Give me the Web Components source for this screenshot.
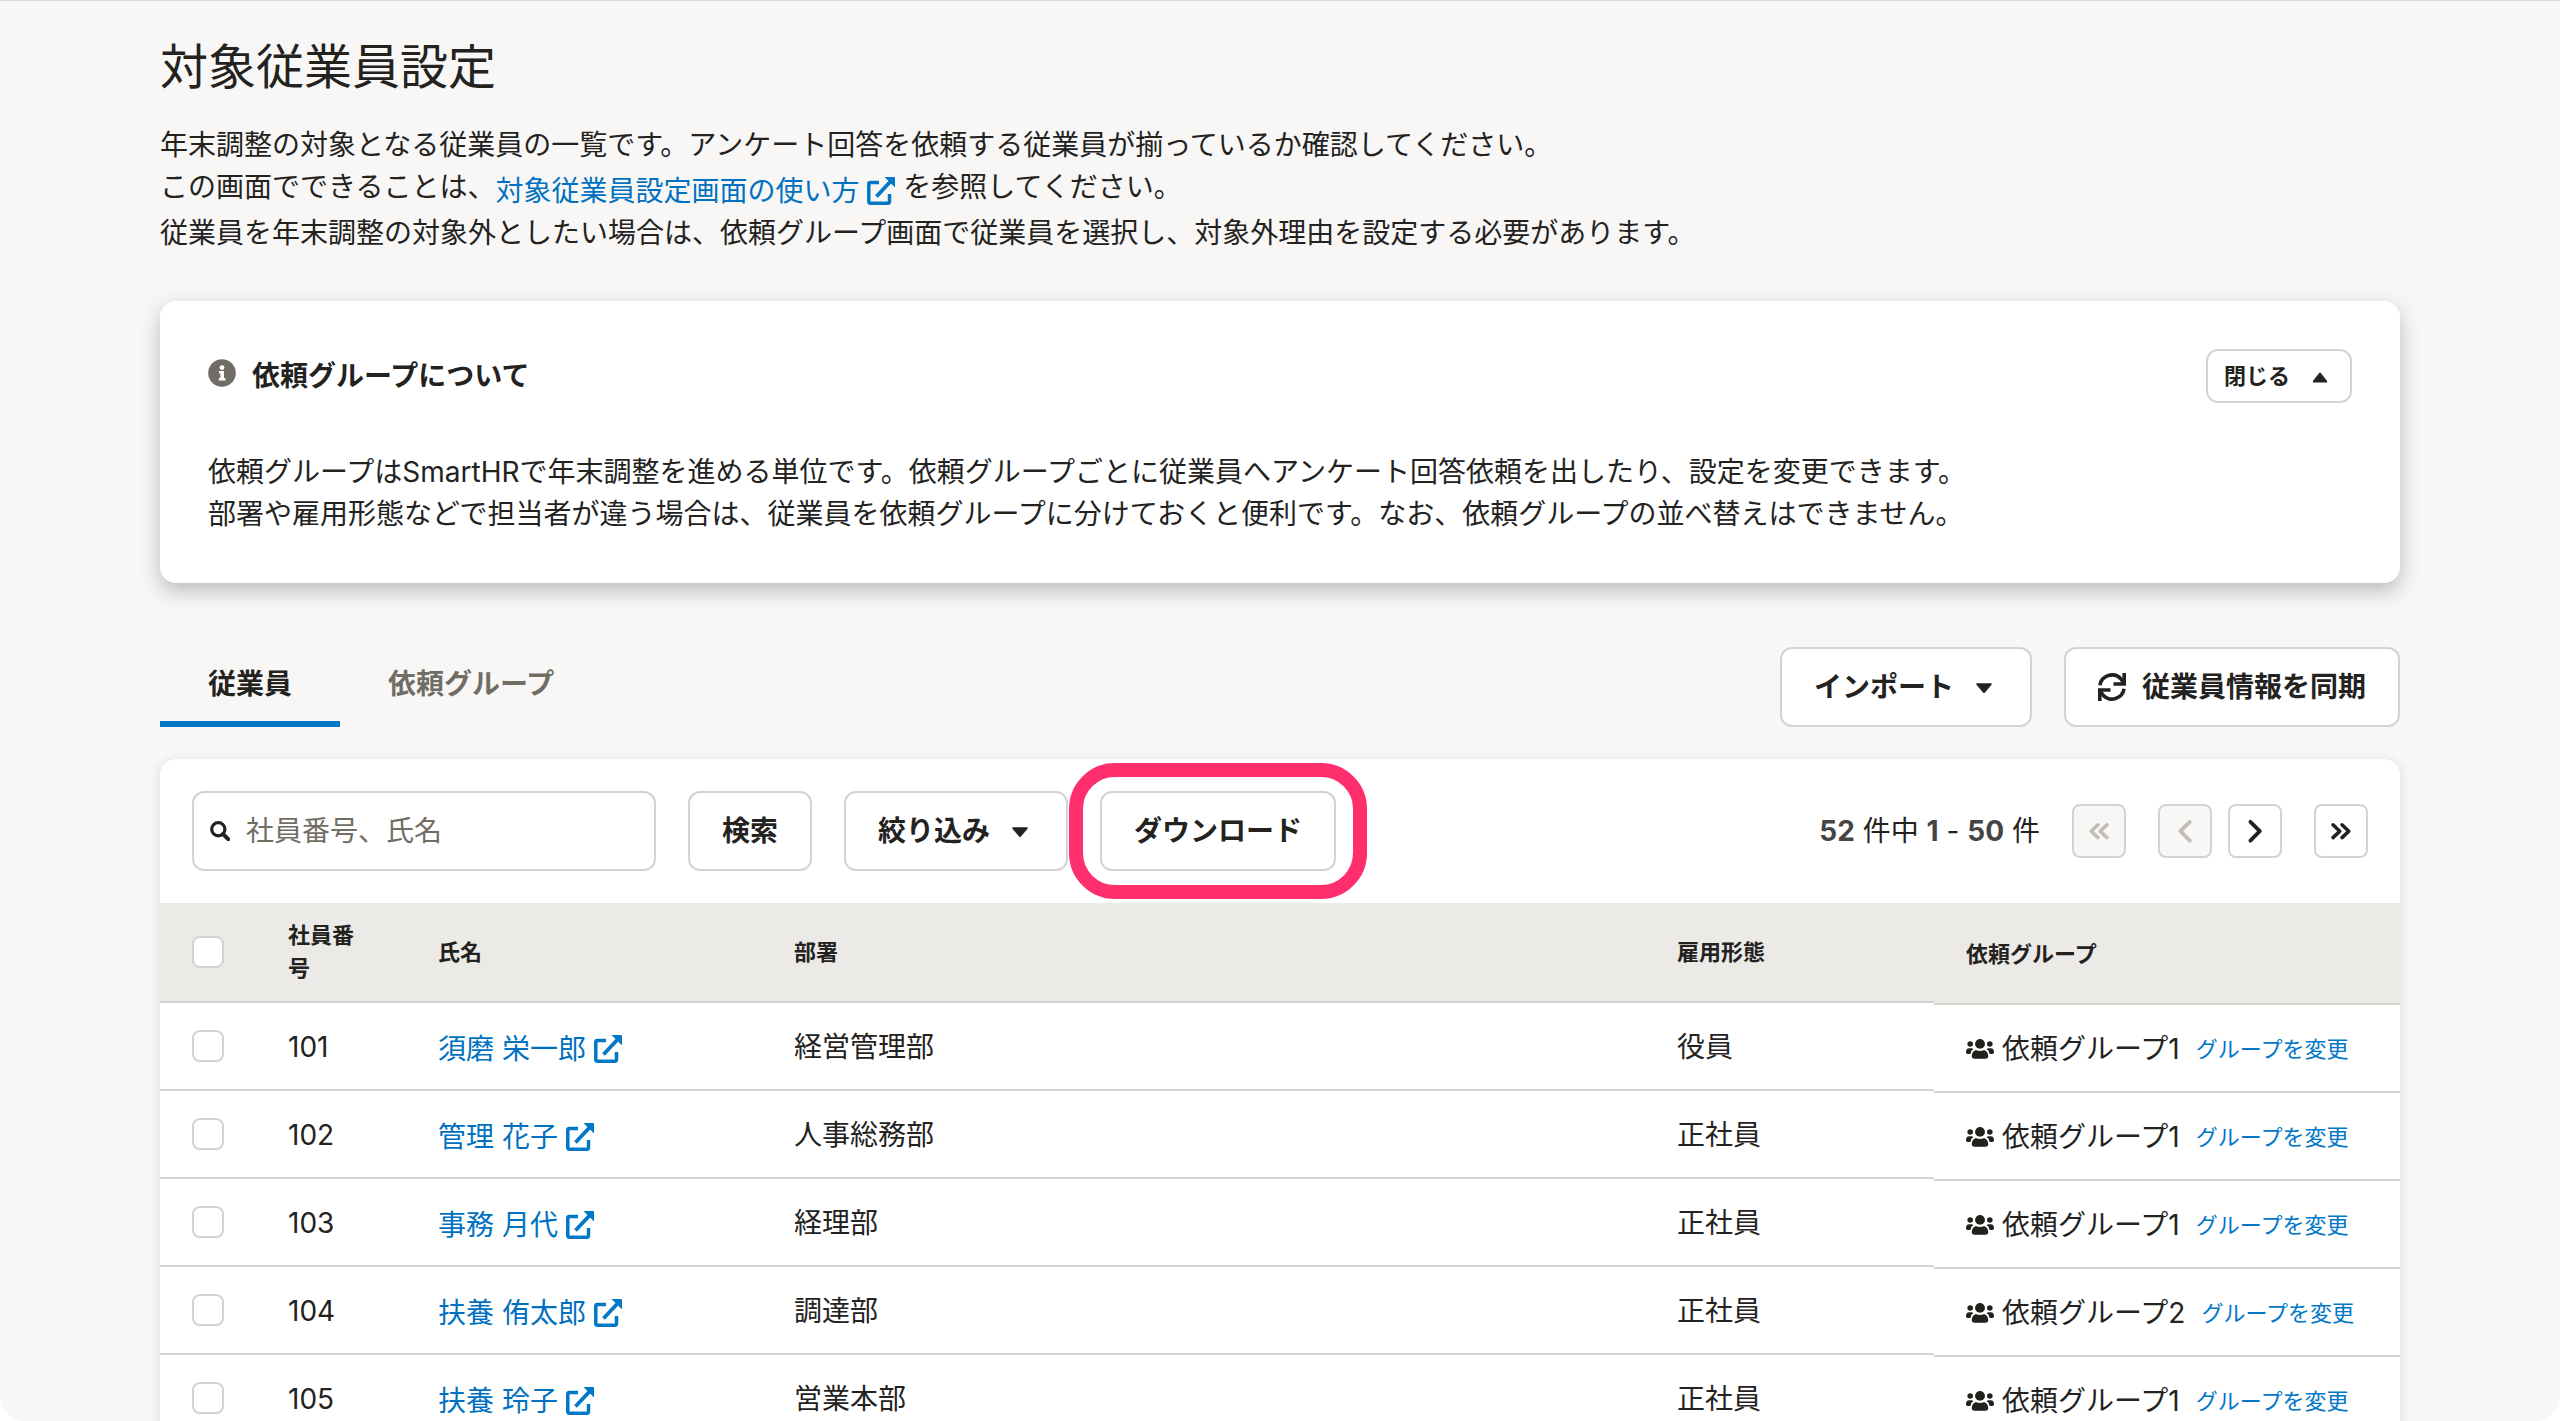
<!DOCTYPE html>
<html lang="ja">
<head>
<meta charset="utf-8">
<meta name="viewport" content="width=device-width, initial-scale=1">
<title>対象従業員設定</title>
<style>
  :root {
    --text: #23221e;
    --grey: #706d65;
    --line: #d4d3ce;
    --head: #ebeae6;
    --base: #f8f7f5;
    --main: #0077c7;
    --link: #0071c1;
    --disabled: #c1bdb7;
    --mark: #ff2e6c;
  }
  html, body { margin: 0; height: 100%; background: #fff; }
  body {
    overflow: hidden;
    color: var(--text);
    font: 400 28px/42px Inter, "Noto Sans CJK JP", sans-serif;
  }
</style>
</head>
<body>
<target-page></target-page>

<template id="t-page">
  <style>
    :host { display: block; box-sizing: border-box; height: 100%; overflow: hidden; background: var(--base); border-top: 1px solid #d6dadd; border-radius: 0 0 24px 24px; }
    main { padding: 36px 160px 0; }
    h1 { margin: 0 0 27px; font-size: 48px; line-height: 60px; font-weight: 400; }
    p { margin: 0; }
    .lead { margin-bottom: 47px; }
    .bar { display: flex; justify-content: space-between; align-items: flex-end; margin: 64px 0 32px; }
    .actions { display: flex; gap: 32px; }
  </style>
  <main>
    <h1>対象従業員設定</h1>
    <p class="lead">年末調整の対象となる従業員の一覧です。アンケート回答を依頼する従業員が揃っているか確認してください。<br>この画面でできることは、<ext-link>対象従業員設定画面の使い方</ext-link> を参照してください。<br>従業員を年末調整の対象外としたい場合は、依頼グループ画面で従業員を選択し、対象外理由を設定する必要があります。</p>
    <info-panel heading="依頼グループについて">
      <p>依頼グループはSmartHRで年末調整を進める単位です。依頼グループごとに従業員へアンケート回答依頼を出したり、設定を変更できます。<br>部署や雇用形態などで担当者が違う場合は、従業員を依頼グループに分けておくと便利です。なお、依頼グループの並べ替えはできません。</p>
    </info-panel>
    <div class="bar">
      <tab-bar></tab-bar>
      <div class="actions">
        <ui-button>インポート<ui-icon name="down"></ui-icon></ui-button>
        <ui-button><ui-icon name="sync"></ui-icon>従業員情報を同期</ui-button>
      </div>
    </div>
    <employee-list></employee-list>
  </main>
</template>

<template id="t-link">
  <style>
    :host { display: inline-flex; vertical-align: -4px; }
    a { display: inline-flex; align-items: center; gap: 8px; color: var(--link); text-decoration: none; }
    ui-icon { color: var(--main); }
  </style>
  <a href="#"><slot></slot><ui-icon name="external"></ui-icon></a>
</template>

<template id="t-button">
  <style>
    :host { display: inline-flex; }
    button {
      display: flex; align-items: center; justify-content: center; gap: 16px; box-sizing: border-box;
      min-height: 80px; padding: 0 32px; border: 2px solid var(--line); border-radius: 12px;
      background: #fff; color: inherit; font: inherit; font-weight: 700; white-space: nowrap;
    }
    :host([size="s"]) button { min-height: 54px; padding: 0 16px; font-size: 22px; line-height: 33px; }
    :host([size="icon"]) button { width: 54px; min-height: 54px; padding: 0; border-radius: 8px; }
    button:disabled { background: var(--base); color: var(--disabled); }
  </style>
  <button type="button"><slot></slot></button>
</template>

<template id="t-panel">
  <style>
    :host { display: block; padding: 48px; border-radius: 16px; background: #fff; box-shadow: 0 8px 20px rgba(51,51,51,.3); }
    header { display: flex; justify-content: space-between; align-items: center; margin-bottom: 48px; }
    h2 { display: flex; align-items: center; gap: 16px; margin: 0; font-size: 28px; line-height: 42px; font-weight: 700; }
    h2 ui-icon { color: var(--grey); margin-bottom: 6px; }
  </style>
  <header>
    <h2><ui-icon name="info"></ui-icon><span></span></h2>
    <ui-button size="s">閉じる<ui-icon name="up"></ui-icon></ui-button>
  </header>
  <slot></slot>
</template>

<template id="t-tabs">
  <style>
    :host { display: flex; }
    button { padding: 16px 48px; border: 0; border-bottom: 6px solid transparent; background: none; color: var(--grey); font: inherit; font-weight: 700; }
    button[aria-selected="true"] { color: var(--text); border-color: var(--main); }
  </style>
  <button type="button" role="tab" aria-selected="true">従業員</button>
  <button type="button" role="tab" aria-selected="false">依頼グループ</button>
</template>

<template id="t-list">
  <style>
    :host { display: block; border-radius: 16px; background: #fff; box-shadow: 0 2px 8px 2px rgba(51,51,51,.1); }
    .tools { display: flex; align-items: center; gap: 32px; padding: 32px; }
    .search { display: flex; align-items: center; gap: 16px; box-sizing: border-box; width: 464px; height: 80px; padding: 0 16px; border: 2px solid var(--line); border-radius: 12px; background: #fff; }
    .search input { flex: 1; min-width: 0; padding: 0; border: 0; outline: 0; background: none; color: inherit; font: inherit; }
    .search input::placeholder { color: var(--grey); opacity: 1; }
    .marked { position: relative; display: inline-flex; }
    .marked::after { content: ""; position: absolute; inset: -28px -31px; border: 14px solid var(--mark); border-radius: 46px; pointer-events: none; }
    .pager { display: flex; align-items: center; gap: 32px; margin-left: auto; }
    .pager div { display: flex; gap: 16px; }
    .pager b { color: #454545; }
    table { width: 100%; border-collapse: separate; border-spacing: 0; table-layout: fixed; }
    .c-check { width: 96px; } .c-no { width: 150px; } .c-name { width: 356px; } .c-type { width: 289px; } .c-group { width: 466px; }
    th, td { box-sizing: border-box; padding: 20px 32px; text-align: left; vertical-align: middle; box-shadow: inset 0 -2px var(--line); }
    td { height: 88px; }
    th { padding: 16px 32px 18px; background: var(--head); font-size: 22px; line-height: 33px; font-weight: 700; }
    th:last-child { padding: 18px 32px 16px; box-shadow: 0 2px var(--line); }
    td:first-child { padding: 20px 32px 22px; }
    td:last-child { padding: 22px 32px 18px; box-shadow: 0 2px var(--line); }
    input[type="checkbox"] { display: block; appearance: none; box-sizing: border-box; width: 32px; height: 32px; margin: 0; border: 2px solid var(--line); border-radius: 8px; background: #fff; }
    .group { display: flex; align-items: center; gap: 8px; white-space: nowrap; }
    .group a { margin-left: 8px; color: var(--main); font-size: 22px; text-decoration: none; }
  </style>
  <div class="tools">
    <label class="search"><ui-icon name="search"></ui-icon><input type="text" placeholder="社員番号、氏名" aria-label="社員番号、氏名"></label>
    <ui-button>検索</ui-button>
    <ui-button>絞り込み<ui-icon name="down"></ui-icon></ui-button>
    <span class="marked"><ui-button>ダウンロード</ui-button></span>
    <div class="pager">
      <span><b>52</b> 件中 <b>1</b> - <b>50</b> 件</span>
      <ui-button size="icon" disabled label="最初"><ui-icon name="first"></ui-icon></ui-button>
      <div>
        <ui-button size="icon" disabled label="前"><ui-icon name="prev"></ui-icon></ui-button>
        <ui-button size="icon" label="次"><ui-icon name="next"></ui-icon></ui-button>
      </div>
      <ui-button size="icon" label="最後"><ui-icon name="last"></ui-icon></ui-button>
    </div>
  </div>
  <table>
    <colgroup><col class="c-check"><col class="c-no"><col class="c-name"><col><col class="c-type"><col class="c-group"></colgroup>
    <thead><tr><th><input type="checkbox" aria-label="すべて選択"></th><th>社員番号</th><th>氏名</th><th>部署</th><th>雇用形態</th><th>依頼グループ</th></tr></thead>
    <tbody></tbody>
  </table>
</template>

<script>
  const stamp = (el, id) => {
    const root = el.attachShadow({ mode: 'open' });
    root.append(document.getElementById(id).content.cloneNode(true));
    return root;
  };

  const ICONS = {
    external: [28, 28, '<path d="M12 5.5H3.5Q1.8 5.5 1.8 7.2V24.5Q1.8 26.2 3.5 26.2H20.8Q22.5 26.2 22.5 24.5V17" fill="none" stroke="currentColor" stroke-width="3.5"/><path d="M24 4L9.5 19.5" stroke="currentColor" stroke-width="3.8" fill="none"/><path d="M17.5 0H27Q28 0 28 1V10.5Z"/>'],
    info: [28, 28, '<circle cx="14" cy="14" r="13.8"/><circle cx="14" cy="8.6" r="2.4" fill="#fff"/><path fill="#fff" d="M11 12h5v7h1.4v2.6H10.8V19h1.6v-4.4H11z"/>'],
    up: [28, 28, '<path d="M14 11.6L20.3 19.6H7.7Z" stroke="currentColor" stroke-width="2" stroke-linejoin="round"/>'],
    down: [28, 28, '<path d="M14 19L20.8 11.2H7.2Z" stroke="currentColor" stroke-width="2" stroke-linejoin="round"/>'],
    sync: [28, 28, '<g fill="none" stroke="currentColor" stroke-width="3.6"><path d="M1.9 12.2A12.2 12.2 0 0 1 22.8 5.8L25.5 9.5"/><path d="M26.2 0V11H15.5"/><path d="M26.1 15.8A12.2 12.2 0 0 1 5.2 22.2L2.5 18.5"/><path d="M1.8 28V17H12.5"/></g>'],
    search: [20, 20, '<g fill="none" stroke="currentColor"><circle cx="8.3" cy="8.3" r="6.6" stroke-width="3.2"/><path d="M13 13L18.2 18.2" stroke-width="4" stroke-linecap="round"/></g>'],
    first: [28, 28, '<path d="M13 7.8L6.2 14.2L13 20.6M22 7.8L15.2 14.2L22 20.6" fill="none" stroke="currentColor" stroke-width="3.6" stroke-linecap="round" stroke-linejoin="round"/>'],
    last: [28, 28, '<path d="M6 7.8L12.8 14.2L6 20.6M15 7.8L21.8 14.2L15 20.6" fill="none" stroke="currentColor" stroke-width="3.6" stroke-linecap="round" stroke-linejoin="round"/>'],
    prev: [28, 28, '<path d="M18.8 4.8L9.4 14.2L18.8 23.6" fill="none" stroke="currentColor" stroke-width="3.8" stroke-linecap="round" stroke-linejoin="round"/>'],
    next: [28, 28, '<path d="M9.4 4.8L18.8 14.2L9.4 23.6" fill="none" stroke="currentColor" stroke-width="3.8" stroke-linecap="round" stroke-linejoin="round"/>'],
    users: [28, 20, '<circle cx="14" cy="4.9" r="4.9"/><circle cx="4.2" cy="5" r="2.8"/><circle cx="23.8" cy="5" r="2.8"/><path d="M5.8 17.2C5.8 13.6 7.8 11.2 10.4 11.2Q14 12.8 17.6 11.2C20.2 11.2 22.2 13.6 22.2 17.2C22.2 18.8 21.3 19.7 19.9 19.7H8.1C6.7 19.7 5.8 18.8 5.8 17.2Z"/><path d="M0 13.2C0 10.8 1.3 9.2 3.2 9.2H5.4Q6.6 9.2 7.4 10Q4.8 11.6 4.4 14.9H1.4Q0 14.9 0 13.2Z"/><path d="M28 13.2C28 10.8 26.7 9.2 24.8 9.2H22.6Q21.4 9.2 20.6 10Q23.2 11.6 23.6 14.9H26.6Q28 14.9 28 13.2Z"/>']
  };

  customElements.define('ui-icon', class extends HTMLElement {
    constructor() { super(); this.attachShadow({ mode: 'open' }); }
    connectedCallback() {
      const [w, h, body] = ICONS[this.getAttribute('name')];
      this.shadowRoot.innerHTML = `<style>:host{display:inline-flex;flex:none}svg{display:block}</style>
        <svg width="${w}" height="${h}" viewBox="0 0 ${w} ${h}" fill="currentColor" aria-hidden="true">${body}</svg>`;
    }
  });

  customElements.define('ui-button', class extends HTMLElement {
    constructor() { super(); stamp(this, 't-button'); }
    connectedCallback() {
      const button = this.shadowRoot.querySelector('button');
      button.disabled = this.hasAttribute('disabled');
      if (this.hasAttribute('label')) button.setAttribute('aria-label', this.getAttribute('label'));
    }
  });

  customElements.define('ext-link', class extends HTMLElement {
    constructor() { super(); stamp(this, 't-link'); }
  });

  customElements.define('info-panel', class extends HTMLElement {
    constructor() { super(); stamp(this, 't-panel'); }
    connectedCallback() {
      this.shadowRoot.querySelector('h2 span').textContent = this.getAttribute('heading');
    }
  });

  customElements.define('tab-bar', class extends HTMLElement {
    constructor() { super(); stamp(this, 't-tabs'); }
    connectedCallback() { this.setAttribute('role', 'tablist'); }
  });

  const EMPLOYEES = [
    ['101', '須磨 栄一郎', '経営管理部', '役員', '依頼グループ1'],
    ['102', '管理 花子', '人事総務部', '正社員', '依頼グループ1'],
    ['103', '事務 月代', '経理部', '正社員', '依頼グループ1'],
    ['104', '扶養 侑太郎', '調達部', '正社員', '依頼グループ2'],
    ['105', '扶養 玲子', '営業本部', '正社員', '依頼グループ1']
  ];

  customElements.define('employee-list', class extends HTMLElement {
    constructor() {
      super();
      stamp(this, 't-list').querySelector('tbody').innerHTML = EMPLOYEES.map(([no, name, dept, type, group]) => `
        <tr><td><input type="checkbox" aria-label="${name}を選択"></td><td>${no}</td><td><ext-link>${name}</ext-link></td>
        <td>${dept}</td><td>${type}</td>
        <td><div class="group"><ui-icon name="users"></ui-icon><span>${group}</span><a href="#">グループを変更</a></div></td></tr>`).join('');
    }
  });

  customElements.define('target-page', class extends HTMLElement {
    constructor() { super(); stamp(this, 't-page'); }
  });
</script>
</body>
</html>
